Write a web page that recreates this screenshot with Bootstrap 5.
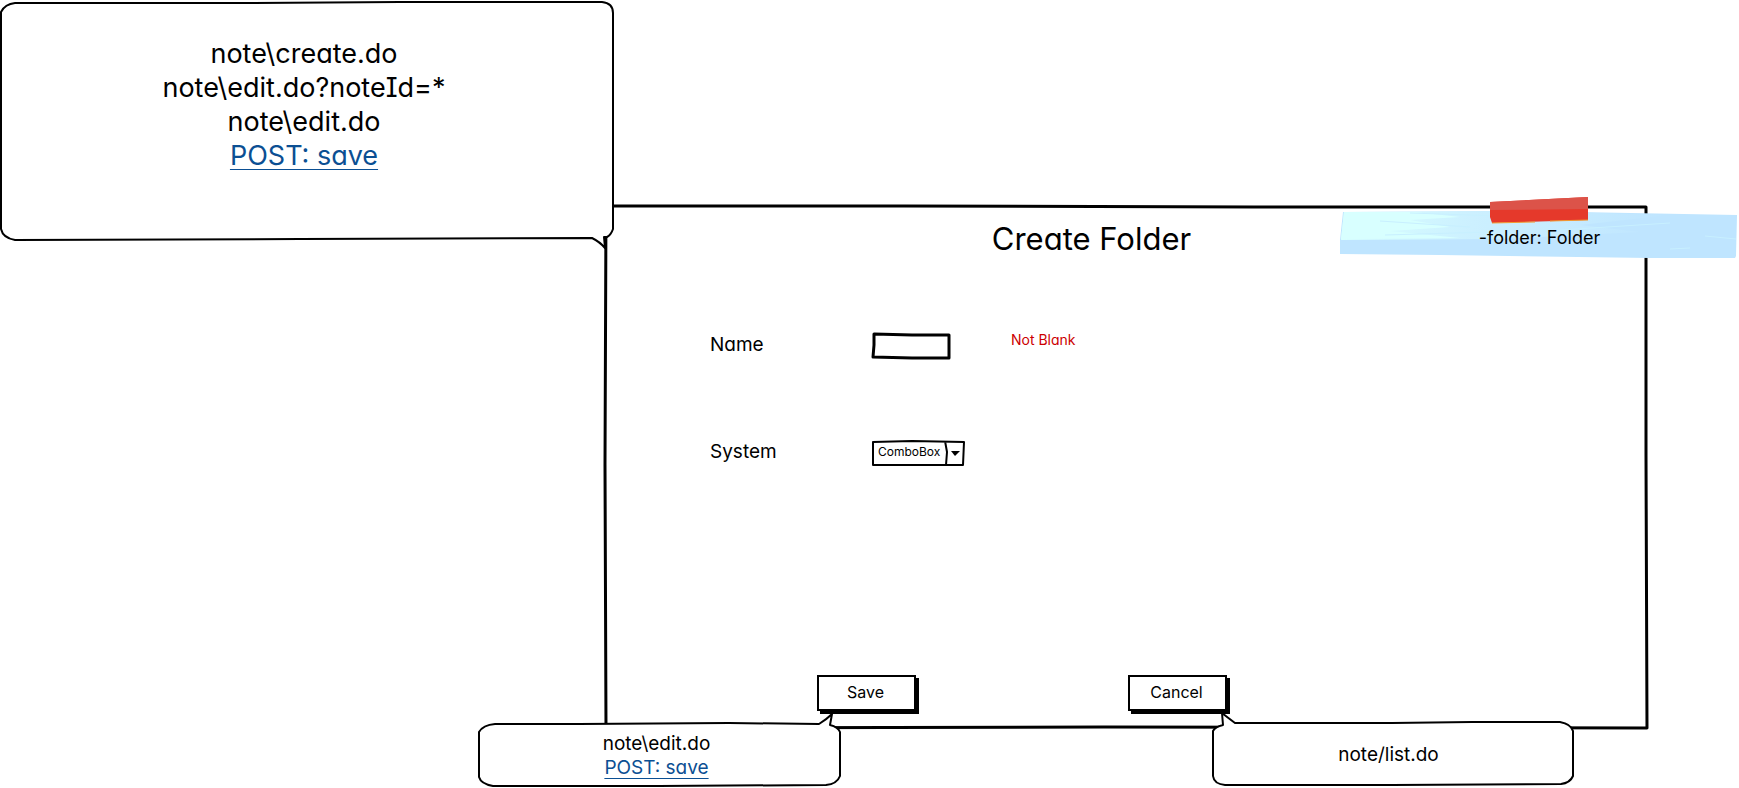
<!DOCTYPE html>
<html lang="en">
<head>
<meta charset="utf-8">
<meta name="viewport" content="width=device-width, initial-scale=1">
<title>Create Folder</title>
<link href="https://cdn.jsdelivr.net/npm/bootstrap@5.3.0/dist/css/bootstrap.min.css" rel="stylesheet">
<style>
  body {
    font-family: Inter, "Noto Sans", sans-serif;
    font-feature-settings: "cv11", "cv08";
    color: #000;
    background: #fff;
    overflow-x: hidden;
  }
  /* Shared column lines let callouts overlap the edges of the window frame */
  .board {
    display: grid;
    grid-template-columns: 479fr 125fr 10fr 226fr 372fr 128fr 233fr 74fr 92fr;
    grid-template-rows: 205px 35px minmax(482px, auto) 7px minmax(58px, auto);
  }
  .sketch { position: absolute; inset: 0; width: 100%; height: 100%; overflow: visible; }
  .sketch path { vector-effect: non-scaling-stroke; }
  .ink { fill: none; stroke: #000; stroke-width: 2; stroke-linejoin: round; }
  .paper { fill: #fff; }
  .frame-line { stroke-width: 3; }

  .window-frame { grid-column: 3 / 9; grid-row: 2 / 5; }
  .callout-main { grid-column: 1 / 4; grid-row: 1 / 3; font-size: 27px; line-height: 34px; padding-top: 37px; padding-right: 6px; }
  .callout-save { grid-column: 2 / 5; grid-row: 4 / 6; font-size: 19px; line-height: 24px; padding-top: 10px; padding-right: 6px; }
  .callout-cancel { grid-column: 6 / 8; grid-row: 4 / 6; font-size: 19px; line-height: 24px; padding-right: 8px; }
  .note-tape { grid-column: 7 / 10; grid-row: 2 / 4; height: 54px; font-size: 18px; line-height: 24px; padding-top: 21px; }

  .route-link { color: #0b4f93; text-decoration: underline; text-decoration-thickness: 1px; text-underline-offset: 4px; text-decoration-skip-ink: none; }
  .window-title { font-size: 31px; line-height: 40px; padding-right: 68px; margin: 14px 0 33px; font-weight: 400; }
  .form-line { display: grid; grid-template-columns: 106fr 162fr 139fr 636fr; height: 107px; align-items: center; }
  .form-line label { grid-column: 2; font-size: 19px; line-height: 24px; padding-bottom: 2px; }
  .name-box { width: 78px; height: 25px; background: transparent; border: 0; padding: 0 6px; font-size: 13px; }
  .control-wrap { width: max-content; }
  .hint { color: #c00; font-size: 14px; line-height: 20px; padding-bottom: 12px; }
  .combo { width: 92px; height: 25px; font-size: 12px; appearance: none; background: transparent; border: 0; padding: 0 0 2px 6px; color: #000; }
  .button-line { display: grid; grid-template-columns: 213fr 311fr 519fr; padding-bottom: 18px; }
  .sketch-btn { width: 99px; height: 36px; border: 2px solid #000; border-radius: 0; background: #fff; box-shadow: 3px 3px 0 #000; font-size: 16px; line-height: 20px; padding: 0 2px 2px 0; color: #000; }
  .sketch-btn:hover { background: #eee; border-color: #000; }
</style>
</head>
<body>
<main class="board">
  <section class="window-frame position-relative d-flex flex-column">
    <svg class="sketch" viewBox="0 0 1043 524" preserveAspectRatio="none" aria-hidden="true">
      <path class="ink" stroke-linecap="round" style="stroke-width:3" d="M2 1L300 1L650 2L1042 2L1042 250L1043 523L500 522L2 523L1 260Z"/>
    </svg>
    <h1 class="window-title text-center position-relative">Create Folder</h1>
    <form class="position-relative d-flex flex-column flex-grow-1">
      <div class="form-line">
        <label for="name">Name</label>
        <div class="control-wrap position-relative d-flex">
          <svg class="sketch" viewBox="0 0 78 25" preserveAspectRatio="none" aria-hidden="true">
            <path class="ink frame-line" d="M2 1L40 2L77 2L77 12L77 25L40 25L1 24L2 12Z"/>
          </svg>
          <input class="name-box position-relative" id="name" type="text" aria-describedby="name-hint">
        </div>
        <span class="hint" id="name-hint">Not Blank</span>
      </div>
      <div class="form-line">
        <label for="system">System</label>
        <div class="control-wrap position-relative d-flex">
          <svg class="sketch" viewBox="0 0 92 25" preserveAspectRatio="none" aria-hidden="true">
            <path class="ink" d="M1 2L40 1L92 2L91 25L50 25L1 25ZM73 1L75 12L74 25"/>
            <path d="M79 11H88L83 16Z"/>
          </svg>
          <select class="combo position-relative" id="system"><option>ComboBox</option></select>
        </div>
      </div>
      <div class="button-line mt-auto">
        <span></span>
        <div><button class="btn sketch-btn" type="submit">Save</button></div>
        <div><button class="btn sketch-btn" type="button">Cancel</button></div>
      </div>
    </form>
  </section>

  <aside class="callout-main position-relative text-center">
    <svg class="sketch" viewBox="0 0 614 240" preserveAspectRatio="none" aria-hidden="true">
      <path class="paper ink" style="fill:#fff" d="M15 3L250 3L400 2L602 2Q613 3 613 13L613 229Q611 235 607 237L604 237L605 248Q600 242 592 238L300 239L15 240Q3 238 1 229L1 100L1 12Q5 4 15 3Z"/>
    </svg>
    <div class="position-relative">
      <div>note\create.do</div>
      <div>note\edit.do?noteId=*</div>
      <div>note\edit.do</div>
      <div><a class="route-link" href="#save">POST: save</a></div>
    </div>
  </aside>

  <aside class="callout-save position-relative text-center">
    <svg class="sketch" viewBox="0 0 361 65" preserveAspectRatio="none" aria-hidden="true">
      <path class="ink" style="fill:#fff" d="M16 2L100 2L250 1L340 2Q348 -3 353 -8L351 3Q359 5 361 10L361 54Q358 62 347 63L180 64L14 64Q2 62 0 55L0 10Q4 3 16 2Z"/>
    </svg>
    <div class="position-relative">
      <div>note\edit.do</div>
      <div><a class="route-link" href="#save">POST: save</a></div>
    </div>
  </aside>

  <aside class="callout-cancel position-relative d-flex align-items-center justify-content-center">
    <svg class="sketch" viewBox="0 0 361 65" preserveAspectRatio="none" aria-hidden="true">
      <path class="ink" style="fill:#fff" d="M23 1L180 1L260 0L348 0Q359 2 361 9L361 54Q358 61 349 62L180 63L13 63Q2 62 1 54L1 9Q3 5 11 3L10 -9Q15 -5 23 1Z"/>
    </svg>
    <span class="position-relative">note/list.do</span>
  </aside>

  <aside class="note-tape position-relative text-center">
    <svg class="sketch" viewBox="0 0 399 54" preserveAspectRatio="none" aria-hidden="true">
      <defs>
        <linearGradient id="sheen"><stop offset="0" stop-color="#d8ffff"/><stop offset=".4" stop-color="#ccf0ff"/><stop offset="1" stop-color="#bfe5ff"/></linearGradient>
      </defs>
      <path fill="#bfe5ff" d="M3 7L180 6L397 10L396 51L395 53L310 53L100 50L0 49L0 35Z"/>
      <path fill="url(#sheen)" d="M4 7L180 6L330 10L240 20L300 27L160 34L1 35Z"/>
      <path fill="#d8ffff" d="M4 7L75 7L120 12L70 15L110 22L50 26L120 33L1 34Z"/>
      <path fill="none" stroke="#c8f0ff" d="M40 16L130 22M45 30L150 27M70 8L190 12M220 25L330 18M330 44L350 43M365 31L396 34"/>
      <path fill="#e5392b" d="M150 -3L248 -8L248 15L152 18L150 12Z"/>
      <path fill="#dc5349" d="M150 -3L248 -8L248 4L150 5Z"/>
      <path fill="none" stroke="#f39b31" d="M152 18L195 17M210 16L248 15"/>
    </svg>
    <span class="position-relative">-folder: Folder</span>
  </aside>
</main>
<script src="https://cdn.jsdelivr.net/npm/bootstrap@5.3.0/dist/js/bootstrap.bundle.min.js"></script>
</body>
</html>
